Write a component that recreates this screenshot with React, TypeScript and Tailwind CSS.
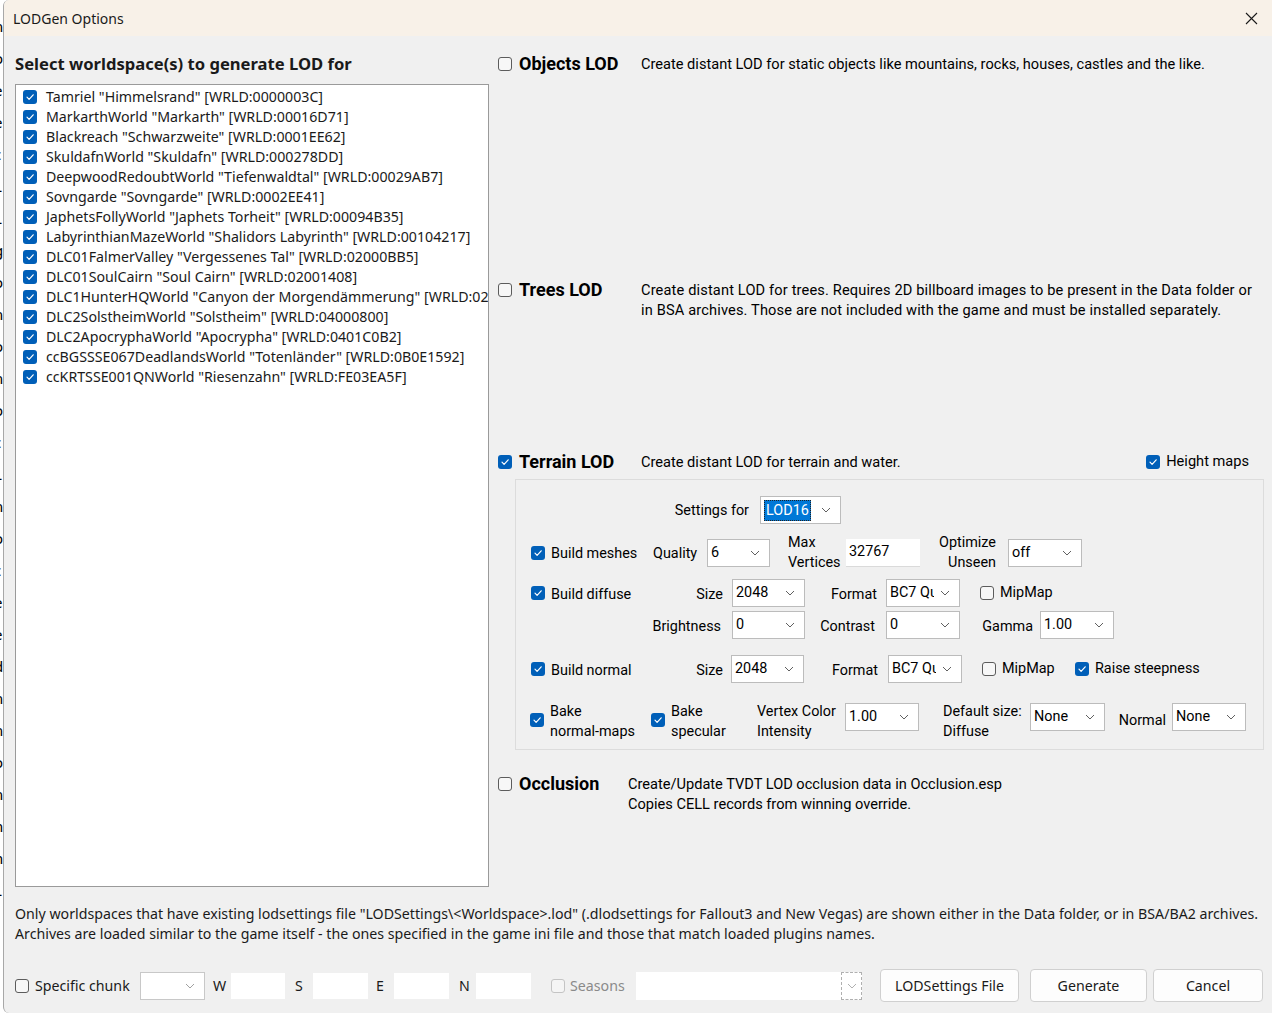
import type { ReactNode } from "react";

const worlds = [
  'Tamriel "Himmelsrand" [WRLD:0000003C]',
  'MarkarthWorld "Markarth" [WRLD:00016D71]',
  'Blackreach "Schwarzweite" [WRLD:0001EE62]',
  'SkuldafnWorld "Skuldafn" [WRLD:000278DD]',
  'DeepwoodRedoubtWorld "Tiefenwaldtal" [WRLD:00029AB7]',
  'Sovngarde "Sovngarde" [WRLD:0002EE41]',
  'JaphetsFollyWorld "Japhets Torheit" [WRLD:00094B35]',
  'LabyrinthianMazeWorld "Shalidors Labyrinth" [WRLD:00104217]',
  'DLC01FalmerValley "Vergessenes Tal" [WRLD:02000BB5]',
  'DLC01SoulCairn "Soul Cairn" [WRLD:02001408]',
  'DLC1HunterHQWorld "Canyon der Morgendämmerung" [WRLD:02001408]',
  'DLC2SolstheimWorld "Solstheim" [WRLD:04000800]',
  'DLC2ApocryphaWorld "Apocrypha" [WRLD:0401C0B2]',
  'ccBGSSSE067DeadlandsWorld "Totenländer" [WRLD:0B0E1592]',
  'ccKRTSSE001QNWorld "Riesenzahn" [WRLD:FE03EA5F]',
];

const Check = ({ on = false, dim = false }: { on?: boolean; dim?: boolean }) =>
  on ? (
    <span className="flex h-[14px] w-[14px] shrink-0 items-center justify-center rounded-[3px] bg-[#005fb8]">
      <svg width="10" height="10" viewBox="0 0 10 10" fill="none">
        <path d="M2 5.2 4.1 7.3 8.2 2.8" stroke="white" strokeWidth="1.2" strokeLinecap="round" strokeLinejoin="round" />
      </svg>
    </span>
  ) : (
    <span
      className={`block h-[14px] w-[14px] shrink-0 rounded-[3px] border ${
        dim ? "border-[#c4c4c4] bg-[#f5f5f5]" : "border-[#5c5c5c] bg-[#f7f7f7]"
      }`}
    />
  );

const Chevron = ({ color = "#606060" }: { color?: string }) => (
  <svg width="10" height="6" viewBox="0 0 10 6" fill="none">
    <path d="M1 1 5 5 9 1" stroke={color} strokeWidth="1" />
  </svg>
);

const Select = ({ value, w, hl = false }: { value?: string; w: string; hl?: boolean }) => (
  <div className={`flex h-[28px] shrink-0 items-center border border-[#bcbcbc] bg-white pr-[9px] pl-[3px] ${w}`}>
    {hl ? (
      <span className="border border-dotted border-[#222] bg-[#0078d7] px-[1px] leading-[19px] text-white">{value}</span>
    ) : (
      <span className="mr-[6px] flex-1 overflow-hidden whitespace-nowrap">{value}</span>
    )}
    <span className="ml-auto">
      <Chevron />
    </span>
  </div>
);

const Two = ({ a, b, w, right = false }: { a: string; b: string; w: string; right?: boolean }) => (
  <div className={`shrink-0 leading-[20px] ${w} ${right ? "text-right" : ""}`}>
    <div>{a}</div>
    <div>{b}</div>
  </div>
);

const Section = ({
  on,
  title,
  tw,
  h,
  children,
  extra,
}: {
  on: boolean;
  title: string;
  tw: string;
  h: string;
  children: ReactNode;
  extra?: ReactNode;
}) => (
  <div className={`flex shrink-0 flex-col ${h}`}>
    <div className="flex items-start">
      <div className="flex h-[24px] items-center">
        <Check on={on} />
      </div>
      <div className={`ml-[7px] h-[24px] shrink-0 text-[18px] leading-[24px] font-bold ${tw}`}>{title}</div>
      <div className="flex-1 pt-[2px] leading-[20px]">{children}</div>
      {extra}
    </div>
  </div>
);

export default function App() {
  return (
    <div className="flex h-[1013px] w-[1272px] overflow-hidden bg-white font-['Noto_Sans',sans-serif] text-[14.2px] text-[#1a1a1a]">
      {/* background window edge */}
      <div className="flex w-[3px] shrink-0 flex-col overflow-hidden pt-[10px] text-[15px] leading-[32px] text-black">
        {["n", "o", "e", "e", "c", "L", "L", "g", "o", "n", "o", "n", "o", "c", "L", "n", "o", "c", "e", "e", "d", "n", "n", "o", "n", "h", "h", "L"].map((c, i) => (
          <span key={i} className="-ml-[6px]">
            {c}
          </span>
        ))}
      </div>
      <div className="flex flex-1 flex-col overflow-hidden rounded-l-[6px] border-l border-[#a8a8a8] bg-[#f0f0f0]">
        {/* title bar */}
        <div className="flex h-[36px] shrink-0 items-center justify-between bg-[#f8f1e8] pr-[14px] pl-[9px]">
          <span className="text-[14px]">LODGen Options</span>
          <svg width="13" height="13" viewBox="0 0 13 13" fill="none">
            <path d="M1 1 12 12M12 1 1 12" stroke="#1a1a1a" strokeWidth="1.1" />
          </svg>
        </div>

        <div className="flex flex-1 flex-col pr-[8px] pl-[11px]">
          <div className="flex h-[851px] shrink-0 gap-[9px]">
            {/* left */}
            <div className="flex w-[474px] shrink-0 flex-col pt-[16px]">
              <div className="h-[24px] text-[16.6px] leading-[24px] font-bold">Select worldspace(s) to generate LOD for</div>
              <div className="mt-[8px] h-[803px] overflow-hidden border border-[#9a9a9a] bg-white pt-[2px] pl-[7px]">
                {worlds.map((w) => (
                  <div key={w} className="flex h-[20px] items-center">
                    <Check on />
                    <span className="ml-[9px] whitespace-nowrap">{w}</span>
                  </div>
                ))}
              </div>
            </div>

            {/* right */}
            <div className="flex flex-1 flex-col pt-[16px] font-['Roboto',sans-serif] text-[14.6px] text-black">
              <Section on={false} title="Objects LOD" tw="w-[122px]" h="h-[226px]">
                Create distant LOD for static objects like mountains, rocks, houses, castles and the like.
              </Section>
              <Section on={false} title="Trees LOD" tw="w-[122px]" h="h-[172px]">
                <div className="whitespace-nowrap tracking-[0.15px]">Create distant LOD for trees. Requires 2D billboard images to be present in the Data folder or</div>
                <div className="whitespace-nowrap tracking-[0.15px]">in BSA archives. Those are not included with the game and must be installed separately.</div>
              </Section>
              <div className="flex h-[322px] shrink-0 flex-col">
                <Section
                  on
                  title="Terrain LOD"
                  tw="w-[122px]"
                  h="h-[24px]"
                  extra={
                    <div className="flex h-[24px] items-center pr-[15px]">
                      <Check on />
                      <span className="ml-[6px]">Height maps</span>
                    </div>
                  }
                >
                  Create distant LOD for terrain and water.
                </Section>
                <div className="mt-[5px] ml-[17px] flex h-[271px] flex-col border border-[#dcdcdc] text-[14.4px]">
                  {/* settings for */}
                  <div className="mt-[16px] flex h-[28px] items-center">
                    <div className="w-[233px] shrink-0 pt-[2px] text-right">Settings for</div>
                    <div className="ml-[11px]">
                      <Select value="LOD16" w="w-[81px]" hl />
                    </div>
                  </div>
                  {/* build meshes */}
                  <div className="mt-[14px] flex h-[29px] items-center">
                    <div className="ml-[15px]">
                      <Check on />
                    </div>
                    <div className="ml-[6px] w-[102px] shrink-0 pt-[2px]">Build meshes</div>
                    <div className="w-[54px] shrink-0 pt-[2px]">Quality</div>
                    <Select value="6" w="w-[63px]" />
                    <div className="ml-[18px]">
                      <Two a="Max" b="Vertices" w="w-[58px]" />
                    </div>
                    <div className="flex h-[28px] w-[74px] shrink-0 items-center border-b border-[#dadada] bg-white pl-[3px]">32767</div>
                    <div className="ml-[15px]">
                      <Two a="Optimize" b="Unseen" w="w-[61px]" right />
                    </div>
                    <div className="ml-[12px]">
                      <Select value="off" w="w-[74px]" />
                    </div>
                  </div>
                  {/* build diffuse */}
                  <div className="mt-[12px] flex h-[28px] items-center">
                    <div className="ml-[15px]">
                      <Check on />
                    </div>
                    <div className="ml-[6px] flex w-[172px] shrink-0 justify-between pt-[3px]">
                      <span>Build diffuse</span>
                      <span>Size</span>
                    </div>
                    <div className="ml-[9px]">
                      <Select value="2048" w="w-[73px]" />
                    </div>
                    <div className="w-[81px] shrink-0 pr-[9px] pt-[3px] text-right">Format</div>
                    <Select value="BC7 Quality" w="w-[74px]" />
                    <div className="ml-[20px]">
                      <Check />
                    </div>
                    <span className="ml-[6px]">MipMap</span>
                  </div>
                  {/* brightness */}
                  <div className="mt-[4px] flex h-[28px] items-center">
                    <div className="w-[216px] shrink-0 pr-[11px] pt-[3px] text-right">Brightness</div>
                    <Select value="0" w="w-[73px]" />
                    <div className="w-[81px] shrink-0 pr-[11px] pt-[3px] text-right">Contrast</div>
                    <Select value="0" w="w-[74px]" />
                    <div className="w-[80px] shrink-0 pr-[7px] pt-[3px] text-right">Gamma</div>
                    <Select value="1.00" w="w-[74px]" />
                  </div>
                  {/* build normal */}
                  <div className="mt-[16px] flex h-[28px] items-center">
                    <div className="ml-[15px]">
                      <Check on />
                    </div>
                    <div className="ml-[6px] flex w-[180px] shrink-0 justify-between pr-[8px] pt-[3px]">
                      <span>Build normal</span>
                      <span>Size</span>
                    </div>
                    <Select value="2048" w="w-[73px]" />
                    <div className="w-[84px] shrink-0 pr-[10px] pt-[3px] text-right">Format</div>
                    <Select value="BC7 Quality" w="w-[74px]" />
                    <div className="ml-[20px]">
                      <Check />
                    </div>
                    <span className="ml-[6px] w-[73px] shrink-0">MipMap</span>
                    <Check on />
                    <span className="ml-[6px]">Raise steepness</span>
                  </div>
                  {/* bake */}
                  <div className="mt-[19px] flex h-[40px] items-start">
                    <div className="mt-[11px] ml-[14px]">
                      <Check on />
                    </div>
                    <div className="ml-[6px]">
                      <Two a="Bake" b="normal-maps" w="w-[101px]" />
                    </div>
                    <div className="mt-[11px]">
                      <Check on />
                    </div>
                    <div className="ml-[6px]">
                      <Two a="Bake" b="specular" w="w-[86px]" />
                    </div>
                    <Two a="Vertex Color" b="Intensity" w="w-[88px]" />
                    <div className="mt-[1px]">
                      <Select value="1.00" w="w-[74px]" />
                    </div>
                    <div className="ml-[24px]">
                      <Two a="Default size:" b="Diffuse" w="w-[87px]" />
                    </div>
                    <div className="mt-[1px]">
                      <Select value="None" w="w-[75px]" />
                    </div>
                    <div className="mt-[8px] w-[67px] shrink-0 pr-[6px] text-right">Normal</div>
                    <div className="mt-[1px]">
                      <Select value="None" w="w-[74px]" />
                    </div>
                  </div>
                </div>
              </div>
              <Section on={false} title="Occlusion" tw="w-[109px]" h="h-[80px]">
                Create/Update TVDT LOD occlusion data in Occlusion.esp
                <br />
                Copies CELL records from winning override.
              </Section>
            </div>
          </div>

          {/* note */}
          <div className="mt-[17px] h-[40px] shrink-0 leading-[20px]">
            <div className="whitespace-nowrap">
              Only worldspaces that have existing lodsettings file "LODSettings\&lt;Worldspace&gt;.lod" (.dlodsettings for Fallout3 and New Vegas) are shown either in the Data folder, or in BSA/BA2 archives.
            </div>
            <div>Archives are loaded similar to the game itself - the ones specified in the game ini file and those that match loaded plugins names.</div>
          </div>

          {/* bottom bar */}
          <div className="mt-[25px] flex h-[33px] shrink-0 items-center">
            <Check />
            <span className="ml-[6px] w-[105px] shrink-0">Specific chunk</span>
            <div className="flex h-[28px] w-[65px] shrink-0 items-center justify-end border border-[#c8c8c8] bg-white pr-[9px]">
              <Chevron color="#a0a0a0" />
            </div>
            <span className="ml-[8px] w-[18px] shrink-0">W</span>
            <div className="h-[26px] w-[54px] shrink-0 bg-white" />
            <span className="ml-[10px] w-[18px] shrink-0">S</span>
            <div className="h-[26px] w-[55px] shrink-0 bg-white" />
            <span className="ml-[8px] w-[18px] shrink-0">E</span>
            <div className="h-[26px] w-[55px] shrink-0 bg-white" />
            <span className="ml-[10px] w-[17px] shrink-0">N</span>
            <div className="h-[26px] w-[55px] shrink-0 bg-white" />
            <div className="ml-[20px]">
              <Check dim />
            </div>
            <span className="ml-[5px] w-[66px] shrink-0 text-[#8a8a8a]">Seasons</span>
            <div className="flex h-[28px] w-[226px] shrink-0 bg-white">
              <div className="flex-1" />
              <div className="flex w-[21px] items-center justify-center border border-dashed border-[#b0b0b0]">
                <Chevron color="#b0b0b0" />
              </div>
            </div>
            <button className="ml-[18px] h-[33px] w-[139px] shrink-0 rounded-[4px] border border-[#d0d0d0] bg-[#fdfdfd]">LODSettings File</button>
            <button className="ml-[11px] h-[33px] w-[117px] shrink-0 rounded-[4px] border border-[#d0d0d0] bg-[#fdfdfd]">Generate</button>
            <button className="ml-[6px] h-[33px] w-[110px] shrink-0 rounded-[4px] border border-[#d0d0d0] bg-[#fdfdfd]">Cancel</button>
          </div>
        </div>
      </div>
    </div>
  );
}
